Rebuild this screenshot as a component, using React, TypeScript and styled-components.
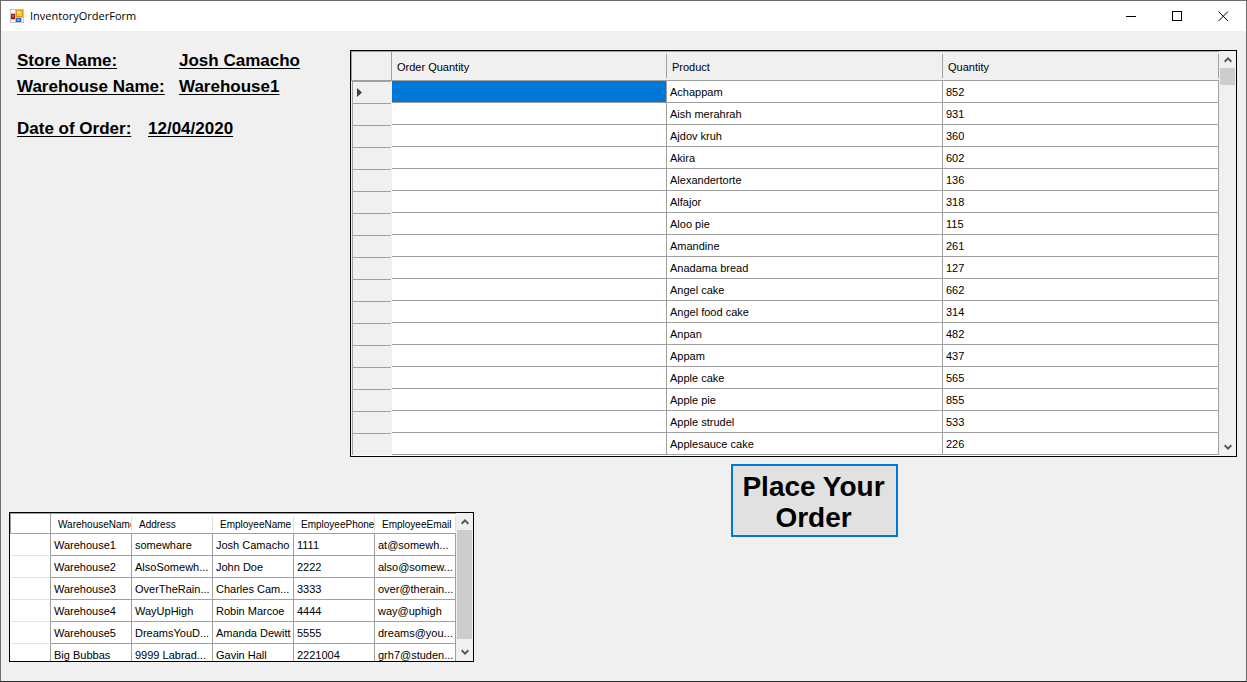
import React from "react";
import styled, { createGlobalStyle, css } from "styled-components";

const LINE = "#a0a0a0";
const FACE = "#f0f0f0";

const GlobalStyle = createGlobalStyle`
  *, *::before, *::after { box-sizing: border-box; }
  body {
    margin: 0;
    color: #000;
    font-family: "Liberation Sans", Arial, sans-serif;
    font-size: 11px;
  }
`;

const Window = styled.main`
  min-height: 100vh;
  display: flex;
  flex-direction: column;
  border: 1px solid #6b6b6b;
  border-bottom-color: #2b2b2b;
  background: ${FACE};
`;

const TitleBar = styled.header`
  display: flex;
  align-items: center;
  height: 30px;
  padding-left: 9px;
  background: #fff;
`;

const Title = styled.h1`
  flex: 1;
  margin: 0 0 0 6px;
  font: 400 11px/16px "Open Sans", "Noto Sans", sans-serif;
`;

const CaptionButton = styled.button`
  display: flex;
  align-items: center;
  justify-content: center;
  width: 46px;
  height: 30px;
  padding: 0;
  border: 0;
  background: transparent;
`;

const Content = styled.div`
  padding: 19px 9px 19px 8px;
`;

const TopArea = styled.section`
  display: flex;
  align-items: flex-start;
`;

const Details = styled.dl`
  flex: none;
  width: 341px;
  margin: 0;
  padding: 1px 0 0 8px;
  font-size: 17px;
  font-weight: 700;
  line-height: 20px;
`;

const Detail = styled.div<{ $labelWidth: number; $gap: number }>`
  display: grid;
  grid-template-columns: ${(p) => p.$labelWidth}px 1fr;
  margin-bottom: ${(p) => p.$gap}px;

  dt, dd {
    margin: 0;
    text-decoration: underline 1px;
    text-underline-offset: 2px;
    text-decoration-skip-ink: none;
  }
`;

const BottomArea = styled.section`
  display: flex;
  align-items: flex-start;
  padding-top: 7px;
`;

const GridFrame = styled.div<{ $height: number; $width?: number; $top?: number }>`
  display: flex;
  ${(p) => (p.$width ? css`flex: none; width: ${p.$width}px;` : css`flex: 1; min-width: 0;`)}
  height: ${(p) => p.$height}px;
  margin-top: ${(p) => p.$top ?? 0}px;
  border: 1px solid #000;
  background: #fff;
`;

const GridView = styled.div`
  flex: 1;
  min-width: 0;
  overflow: hidden;
  border-top: 1px solid ${LINE};
`;

const Table = styled.table`
  width: 100%;
  table-layout: fixed;
  border-collapse: separate;
  border-spacing: 0;
  line-height: 14px;
`;

const HeadCell = styled.th<{ $plain?: boolean }>`
  height: ${(p) => (p.$plain ? 20 : 29)}px;
  padding: 0;
  border-bottom: 1px solid ${LINE};
  background: ${(p) => (p.$plain ? "#fff" : FACE)};
  font-size: ${(p) => (p.$plain ? 10 : 11)}px;
  font-weight: 400;
  text-align: left;
  white-space: nowrap;
  overflow: hidden;

  span {
    display: block;
    overflow: hidden;
    height: ${(p) => (p.$plain ? 16 : 24)}px;
    padding-left: ${(p) => (p.$plain ? 7 : 5)}px;
    line-height: ${(p) => (p.$plain ? 18 : 26)}px;
    border-right: 1px solid ${(p) => (p.$plain ? "#e2e2e2" : LINE)};
  }
`;

const CornerCell = styled.th<{ $plain?: boolean }>`
  padding: 0;
  border: solid ${LINE};
  border-width: 0 1px 1px 1px;
  background: ${(p) => (p.$plain ? "#fff" : FACE)};
`;

const RowHead = styled.th<{ $plain?: boolean }>`
  height: 22px;
  padding: 0;
  background: ${(p) => (p.$plain ? "#fff" : FACE)};
  ${(p) => (p.$plain ? css`border-right: 1px solid ${LINE};` : "")}

  div {
    display: flex;
    align-items: center;
    height: 22px;
    margin: 0 1px;
    padding-left: 4px;
    ${(p) =>
      p.$plain
        ? css`border-bottom: 1px solid #e2e2e2;`
        : css`
            border-top: 1px solid ${LINE};
            border-left: 1px solid ${LINE};
          `}
  }
`;

const Cell = styled.td<{ $selected?: boolean }>`
  height: 22px;
  padding: 0 0 0 3px;
  border: solid ${LINE};
  border-width: 0 1px 1px 0;
  background: ${(p) => (p.$selected ? "#0078d7" : "#fff")};
  white-space: nowrap;
  overflow: hidden;
`;

const ScrollBar = styled.div`
  flex: none;
  display: flex;
  flex-direction: column;
  width: 17px;
  padding-left: 1px;
  background: ${FACE};
`;

const ScrollButton = styled.button`
  display: flex;
  align-items: center;
  justify-content: center;
  flex: none;
  height: 17px;
  padding: 0;
  border: 0;
  background: ${FACE};
`;

const Track = styled.div`
  flex: 1;
`;

const Thumb = styled.div<{ $height: number }>`
  width: 15px;
  height: ${(p) => p.$height}px;
  background: #cdcdcd;
`;

const OrderButton = styled.button`
  width: 167px;
  height: 73px;
  margin-left: 257px;
  padding: 2px 2px 0 0;
  border: 2px solid #0078d7;
  background: #e1e1e1;
  color: #000;
  font: 700 28px/31px "Liberation Sans", Arial, sans-serif;
`;

const FormIcon = () => (
  <svg width="14" height="14" viewBox="0 0 14 14" aria-hidden="true">
    <rect width="14" height="14" fill="#c2c4c6" />
    <rect x="1" y="1" width="4" height="3" fill="#fff" />
    <rect x="1" y="11" width="4" height="2" fill="#fff" />
    <rect x="12" y="9" width="1" height="4" fill="#fff" />
    <rect x="6" y="1" width="7" height="7" fill="#d9960f" />
    <rect x="7" y="2" width="5" height="5" fill="#fbc93d" />
    <rect x="7" y="2" width="3" height="2" fill="#ffe58e" />
    <rect x="1" y="5" width="4" height="5" fill="#9c1c14" />
    <rect x="2" y="6" width="2" height="2" fill="#e0604c" />
    <rect x="6" y="9" width="5" height="4" fill="#2d62c8" />
    <rect x="7" y="10" width="3" height="2" fill="#6fa4f2" />
  </svg>
);

const Chevron = ({ down }: { down?: boolean }) => (
  <svg width="8" height="7" viewBox="0 0 8 7" aria-hidden="true">
    <path
      d={down ? "M0.6 1.3 4 4.7 7.4 1.3" : "M0.6 5.7 4 2.3 7.4 5.7"}
      fill="none"
      stroke="#555"
      strokeWidth="2"
    />
  </svg>
);

const Scroll = ({ thumb }: { thumb: number }) => (
  <ScrollBar>
    <ScrollButton aria-label="Scroll up">
      <Chevron />
    </ScrollButton>
    <Track>
      <Thumb $height={thumb} />
    </Track>
    <ScrollButton aria-label="Scroll down">
      <Chevron down />
    </ScrollButton>
  </ScrollBar>
);

const products: [string, number][] = [
  ["Achappam", 852],
  ["Aish merahrah", 931],
  ["Ajdov kruh", 360],
  ["Akira", 602],
  ["Alexandertorte", 136],
  ["Alfajor", 318],
  ["Aloo pie", 115],
  ["Amandine", 261],
  ["Anadama bread", 127],
  ["Angel cake", 662],
  ["Angel food cake", 314],
  ["Anpan", 482],
  ["Appam", 437],
  ["Apple cake", 565],
  ["Apple pie", 855],
  ["Apple strudel", 533],
  ["Applesauce cake", 226],
];

const warehouseColumns = [
  "WarehouseName",
  "Address",
  "EmployeeName",
  "EmployeePhone",
  "EmployeeEmail",
];

const warehouses = [
  ["Warehouse1", "somewhare", "Josh Camacho", "1111", "at@somewh..."],
  ["Warehouse2", "AlsoSomewh...", "John Doe", "2222", "also@somew..."],
  ["Warehouse3", "OverTheRain...", "Charles Cam...", "3333", "over@therain..."],
  ["Warehouse4", "WayUpHigh", "Robin Marcoe", "4444", "way@uphigh"],
  ["Warehouse5", "DreamsYouD...", "Amanda Dewitt", "5555", "dreams@you..."],
  ["Big Bubbas", "9999 Labrad...", "Gavin Hall", "2221004", "grh7@studen..."],
];

const SelectorCol = styled.col`
  width: 41px;
`;

const QuantityCol = styled.col`
  width: 275px;
`;

export default function App() {
  return (
    <>
      <GlobalStyle />
      <Window>
        <TitleBar>
          <FormIcon />
          <Title>InventoryOrderForm</Title>
          <CaptionButton aria-label="Minimize">
            <svg width="11" height="11" aria-hidden="true">
              <path d="M0 5.5H10" stroke="#000" />
            </svg>
          </CaptionButton>
          <CaptionButton aria-label="Maximize">
            <svg width="11" height="11" aria-hidden="true">
              <rect x="0.5" y="0.5" width="9" height="9" fill="none" stroke="#000" />
            </svg>
          </CaptionButton>
          <CaptionButton aria-label="Close">
            <svg width="11" height="11" aria-hidden="true">
              <path d="M0.5 0.5 10 10M10 0.5 0.5 10" stroke="#000" />
            </svg>
          </CaptionButton>
        </TitleBar>
        <Content>
          <TopArea>
            <Details>
              <Detail $labelWidth={162} $gap={6}>
                <dt>Store Name:</dt>
                <dd>Josh Camacho</dd>
              </Detail>
              <Detail $labelWidth={162} $gap={22}>
                <dt>Warehouse Name:</dt>
                <dd>Warehouse1</dd>
              </Detail>
              <Detail $labelWidth={131} $gap={0}>
                <dt>Date of Order:</dt>
                <dd>12/04/2020</dd>
              </Detail>
            </Details>
            <GridFrame $height={407}>
              <GridView>
                <Table>
                  <colgroup>
                    <SelectorCol />
                    <QuantityCol />
                    <col />
                    <col />
                  </colgroup>
                  <thead>
                    <tr>
                      <CornerCell />
                      <HeadCell scope="col"><span>Order Quantity</span></HeadCell>
                      <HeadCell scope="col"><span>Product</span></HeadCell>
                      <HeadCell scope="col"><span>Quantity</span></HeadCell>
                    </tr>
                  </thead>
                  <tbody>
                    {products.map(([name, quantity], i) => (
                      <tr key={name}>
                        <RowHead scope="row">
                          <div>
                            {i === 0 && (
                              <svg width="5" height="9" aria-hidden="true">
                                <path d="M0 0 5 4.5 0 9Z" fill="#404040" />
                              </svg>
                            )}
                          </div>
                        </RowHead>
                        <Cell $selected={i === 0} />
                        <Cell>{name}</Cell>
                        <Cell>{quantity}</Cell>
                      </tr>
                    ))}
                  </tbody>
                </Table>
              </GridView>
              <Scroll thumb={17} />
            </GridFrame>
          </TopArea>
          <BottomArea>
            <GridFrame $height={150} $width={465} $top={48}>
              <GridView>
                <Table>
                  <colgroup>
                    <SelectorCol />
                    {warehouseColumns.map((c) => (
                      <col key={c} />
                    ))}
                  </colgroup>
                  <thead>
                    <tr>
                      <CornerCell $plain />
                      {warehouseColumns.map((c) => (
                        <HeadCell key={c} scope="col" $plain>
                          <span>{c}</span>
                        </HeadCell>
                      ))}
                    </tr>
                  </thead>
                  <tbody>
                    {warehouses.map((row) => (
                      <tr key={row[0]}>
                        <RowHead scope="row" $plain>
                          <div />
                        </RowHead>
                        {row.map((value) => (
                          <Cell key={value}>{value}</Cell>
                        ))}
                      </tr>
                    ))}
                  </tbody>
                </Table>
              </GridView>
              <Scroll thumb={109} />
            </GridFrame>
            <OrderButton>Place Your Order</OrderButton>
          </BottomArea>
        </Content>
      </Window>
    </>
  );
}
